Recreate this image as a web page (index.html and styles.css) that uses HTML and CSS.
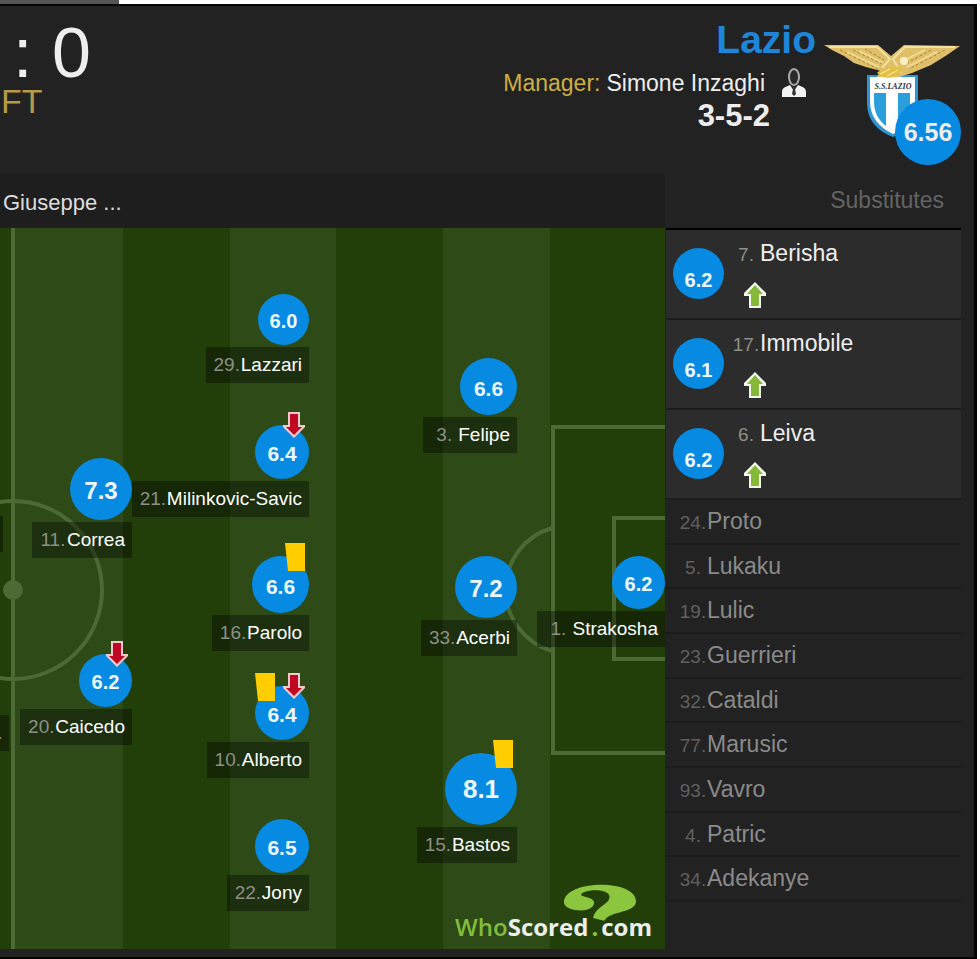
FILE: index.html
```html
<!DOCTYPE html>
<html lang="en">
<head>
  <meta charset="UTF-8">
  <title>Lazio - Match Centre</title>
  <link rel="stylesheet" href="styles.css">
</head>
<body>
  <!-- shared icons -->
  <svg class="defs" width="0" height="0" aria-hidden="true">
    <symbol id="sub-off" viewBox="0 0 22 26">
      <path d="M5 0h12v13h5v2L11 26 0 15v-2h5z" fill="#f3c9cd"/>
      <path d="M7 2h8v13h4l-8 8-8-8h4z" fill="#c00822"/>
    </symbol>
    <symbol id="sub-on" viewBox="0 0 22 26">
      <path d="M11 0l11 11v3h-5v12H5V14H0v-3z" fill="#f4faea"/>
      <path d="M11 3l8 9h-4v12H7V12H3z" fill="#86b93a"/>
    </symbol>
    <symbol id="card" viewBox="0 0 20 28">
      <path d="M0 0h20v28H3z" fill="#ffcd00"/>
    </symbol>
  </svg>

  <div class="tab-strip"></div>

  <main class="panel">
    <header class="match-header">
      <div class="result">
        <div class="score">: 0</div>
        <div class="status">FT</div>
      </div>
      <div class="team-info">
        <a class="team-name" href="#">Lazio</a>
        <div class="manager">
          <span class="manager-label">Manager:</span>
          <span class="manager-name">Simone Inzaghi</span>
          <svg class="manager-icon" viewBox="0 0 24 30">
            <ellipse cx="12" cy="9" rx="5" ry="8" fill="#2a2a2a" stroke="#aaa" stroke-width="2"/>
            <path d="M0 29v-5c0-4 3-5 8-7l4 6 4-6c5 2 8 3 8 7v5z" fill="#f2f2f2"/>
            <path d="M10 18h4l-1 3 1 5-2 2-2-2 1-5z" fill="#333"/>
          </svg>
        </div>
        <div class="formation">3-5-2</div>
      </div>
      <div class="crest">
        <svg class="crest-logo" viewBox="0 0 138 94">
          <path d="M44 31h51v26c0 18-10 29-25 36C54 87 44 76 44 58z" fill="#2f95d2"/>
          <path d="M47 33h45v24c0 15-8 26-22 33C56 83 47 73 47 57z" fill="#fff"/>
          <path d="M51 49h12v33c-8-6-12-14-12-25zM75 49h12v9c0 10-4 18-12 25z" fill="#2b9fdc"/>
          <text x="70" y="45" text-anchor="middle" class="crest-text">S.S.LAZIO</text>
          <path d="M1 1h54l13 11L81 1l56 1-13 9-16 10-19 8-13 4H54l4-6-15-4-12-4-10-7L9 6z" fill="#dfbf69"/>
          <path d="M6 3h48l13 12-8 9M132 3H82L70 15l8 14" fill="none" stroke="#f4e0a0" stroke-width="2"/>
          <path d="M24 8l32 15M36 7l24 12M114 8L84 23M102 6L80 17" fill="none" stroke="#f0d88e" stroke-width="2"/>
          <path d="M17 6l38 19M30 6l29 14M42 5l19 11M122 6L86 25M108 6L82 20" fill="none" stroke="#a98735" stroke-width="1" stroke-dasharray="3 2"/>
          <circle cx="81" cy="17" r="4" fill="#fbf0c4"/>
          <path d="M54 29c6-6 18-8 26-5l-4 7c-7 4-16 4-22-2z" fill="#e2bf45"/>
          <path d="M57 30l10-5M64 32l11-6" stroke="#fff0a8" stroke-width="1"/>
        </svg>
        <span class="team-rating">6.56</span>
      </div>
    </header>

    <div class="lineup">
      <section class="field">
        <div class="field-title">Giuseppe ...</div>
        <div class="pitch">
          <svg class="grass" viewBox="0 0 665 721" preserveAspectRatio="xMaxYMin slice" aria-hidden="true">
            <rect width="665" height="721" fill="#223e09"/>
            <g fill="#2d4a17">
              <rect x="13" width="110" height="721"/>
              <rect x="230" width="106" height="721"/>
              <rect x="443" width="107" height="721"/>
            </g>
            <g fill="none" stroke="#4b6a35" stroke-width="4">
              <path d="M13 0v721"/>
              <circle cx="13" cy="362" r="89"/>
              <path d="M665 199H553v326h112M665 290h-51v141h51"/>
              <path d="M552 300a64 64 0 0 0 0 123"/>
            </g>
            <circle cx="13" cy="362" r="10" fill="#4b6a35"/>
          </svg>

          <div class="player edge-high"><span class="label"></span></div>
          <div class="player edge-low"><span class="label">.</span></div>

          <div class="player attack correa">
            <span class="rating size-xl">7.3</span>
            <span class="label"><span class="num">11.</span><a href="#">Correa</a></span>
          </div>
          <div class="player attack caicedo">
            <span class="rating size-s">6.2
              <span class="events"><svg class="arrow"><use href="#sub-off"/></svg></span>
            </span>
            <span class="label"><span class="num">20.</span><a href="#">Caicedo</a></span>
          </div>

          <div class="player midfield lazzari">
            <span class="rating size-xs">6.0</span>
            <span class="label"><span class="num">29.</span><a href="#">Lazzari</a></span>
          </div>
          <div class="player midfield milinkovic">
            <span class="rating size-m">6.4
              <span class="events"><svg class="arrow"><use href="#sub-off"/></svg></span>
            </span>
            <span class="label"><span class="num">21.</span><a href="#">Milinkovic-Savic</a></span>
          </div>
          <div class="player midfield parolo">
            <span class="rating size-l">6.6
              <span class="events"><svg class="card"><use href="#card"/></svg></span>
            </span>
            <span class="label"><span class="num">16.</span><a href="#">Parolo</a></span>
          </div>
          <div class="player midfield alberto">
            <span class="rating size-m">6.4
              <span class="events"><svg class="card"><use href="#card"/></svg><svg class="arrow"><use href="#sub-off"/></svg></span>
            </span>
            <span class="label"><span class="num">10.</span><a href="#">Alberto</a></span>
          </div>
          <div class="player midfield jony">
            <span class="rating size-m">6.5</span>
            <span class="label"><span class="num">22.</span><a href="#">Jony</a></span>
          </div>

          <div class="player defence felipe">
            <span class="rating size-l">6.6</span>
            <span class="label"><span class="num">3.</span><a href="#">Felipe</a></span>
          </div>
          <div class="player defence acerbi">
            <span class="rating size-xl">7.2</span>
            <span class="label"><span class="num">33.</span><a href="#">Acerbi</a></span>
          </div>
          <div class="player defence bastos">
            <span class="rating size-xxl">8.1
              <span class="events"><svg class="card"><use href="#card"/></svg></span>
            </span>
            <span class="label"><span class="num">15.</span><a href="#">Bastos</a></span>
          </div>

          <div class="player keeper">
            <span class="rating size-s">6.2</span>
            <span class="label"><span class="num">1.</span><a href="#">Strakosha</a></span>
          </div>

          <div class="brand">
            <svg class="brand-mark" viewBox="490 493 222 112" aria-hidden="true">
              <path d="M545 573C510 572 490 562 492 545 495 515 545 495 605 495 665 495 710 515 710 545 710 570 670 575 640 585 625 590 620 596 614 604L580 596C585 570 610 560 625 545 640 525 620 513 590 512 560 512 540 520 545 528 560 535 585 535 583 552 580 567 560 573 545 573z" fill="#8cc63f"/>
            </svg>
            <span class="who">Who</span>Scored<span class="dot">.</span>com
          </div>
        </div>
      </section>

      <aside class="substitutes">
        <h2>Substitutes</h2>
        <ul class="used">
          <li>
            <span class="rating size-xs">6.2</span>
            <div class="sub-info">
              <div><span class="num">7.</span><a href="#">Berisha</a></div>
              <svg class="arrow"><use href="#sub-on"/></svg>
            </div>
          </li>
          <li>
            <span class="rating size-xs">6.1</span>
            <div class="sub-info">
              <div><span class="num">17.</span><a href="#">Immobile</a></div>
              <svg class="arrow"><use href="#sub-on"/></svg>
            </div>
          </li>
          <li>
            <span class="rating size-xs">6.2</span>
            <div class="sub-info">
              <div><span class="num">6.</span><a href="#">Leiva</a></div>
              <svg class="arrow"><use href="#sub-on"/></svg>
            </div>
          </li>
        </ul>
        <ul class="bench">
          <li><span class="num">24.</span><a href="#">Proto</a></li>
          <li><span class="num">5.</span><a href="#">Lukaku</a></li>
          <li><span class="num">19.</span><a href="#">Lulic</a></li>
          <li><span class="num">23.</span><a href="#">Guerrieri</a></li>
          <li><span class="num">32.</span><a href="#">Cataldi</a></li>
          <li><span class="num">77.</span><a href="#">Marusic</a></li>
          <li><span class="num">93.</span><a href="#">Vavro</a></li>
          <li><span class="num">4.</span><a href="#">Patric</a></li>
          <li><span class="num">34.</span><a href="#">Adekanye</a></li>
        </ul>
      </aside>
    </div>
  </main>
</body>
</html>
```
FILE: styles.css
```css
* {
  box-sizing: border-box;
}
body {
  margin: 0;
  background: #fff;
  font-family: "Liberation Sans", Arial, sans-serif;
  color: #eee;
}
a {
  color: inherit;
  text-decoration: none;
}
ul {
  list-style: none;
  margin: 0;
  padding: 0;
}
svg {
  display: block;
}
.defs {
  position: absolute;
}
.tab-strip {
  width: 119px;
  height: 4px;
  background: #555;
}
.panel {
  margin-right: 3px;
  padding-bottom: 8px;
  background: #222;
  border: solid #050505;
  border-width: 2px 3px 2px 0;
}

/* header */
.match-header {
  display: flex;
  height: 168px;
  padding: 12px 13px 0 0;
}
.score {
  padding-left: 13px;
  font-size: 70px;
  line-height: 70px;
}
.status {
  padding-left: 1px;
  font-size: 34px;
  line-height: 26px;
  color: #b8994a;
}
.team-info {
  flex: 1;
  display: flex;
  flex-direction: column;
  align-items: flex-end;
}
.team-name {
  font-size: 39px;
  line-height: 44px;
  font-weight: bold;
  color: #1d86d8;
}
.manager {
  display: flex;
  align-items: center;
  gap: 6px;
  height: 42px;
  padding-right: 10px;
  font-size: 23px;
}
.manager-label {
  color: #cdb044;
}
.manager-icon {
  width: 24px;
  height: 30px;
  margin-left: 11px;
}
.formation {
  padding-right: 46px;
  font-size: 31px;
  line-height: 24px;
  font-weight: bold;
}
.crest {
  position: relative;
  width: 138px;
  margin-left: 7px;
  padding-top: 26px;
}
.crest-logo {
  width: 138px;
  height: 94px;
}
.crest-text {
  font: italic bold 8px "Liberation Serif", serif;
  fill: #334;
}
.team-rating {
  position: absolute;
  right: 0;
  top: 81px;
  width: 66px;
  border-radius: 50%;
  background: #078ae2;
  font-size: 25px;
  line-height: 66px;
  font-weight: bold;
  text-align: center;
}

/* lineup */
.lineup {
  display: flex;
}
.field {
  flex: 1;
}
.field-title {
  height: 54px;
  padding: 2px 3px 0;
  background: #1e1e1e;
  font-size: 22px;
  line-height: 54px;
  color: #ddd;
}
.pitch {
  position: relative;
  height: 721px;
  overflow: hidden;
}
.grass {
  width: 100%;
  height: 100%;
}
.player {
  position: absolute;
  display: flex;
  flex-direction: column;
  align-items: flex-end;
  gap: 2px;
}
.label {
  display: flex;
  min-width: 20px;
  height: 36px;
  padding: 0 7px;
  justify-content: flex-end;
  background: rgba(0, 0, 0, 0.36);
  font-size: 19px;
  line-height: 36px;
  color: #fff;
}
.num {
  display: inline-block;
  width: 28px;
  font-size: 19px;
  text-align: center;
  color: #8c8f86;
}
.rating {
  position: relative;
  display: flex;
  align-items: center;
  justify-content: center;
  padding-top: 4px;
  border-radius: 50%;
  background: #078ae2;
  font-size: 20px;
  font-weight: bold;
  color: #eef9ff;
}
.size-xs { width: 51px; height: 51px; }
.size-s { width: 53px; height: 53px; }
.size-m { width: 54px; height: 54px; font-size: 21px; }
.size-l { width: 57px; height: 57px; font-size: 21px; }
.size-xl { width: 62px; height: 62px; font-size: 24px; }
.size-xxl { width: 72px; height: 72px; padding-top: 0; font-size: 26px; }

.events {
  position: absolute;
  top: -13px;
  right: 4px;
  display: flex;
  gap: 8px;
}
.arrow {
  width: 22px;
  height: 26px;
}
.card {
  width: 20px;
  height: 28px;
}

/* player spots, measured from the goal line */
.attack { right: 533px; }
.midfield { right: 356px; }
.defence { right: 148px; }
.keeper { right: 0; top: 328px; }
.correa { top: 230px; }
.caicedo { top: 426px; }
.lazzari { top: 66px; }
.milinkovic { top: 197px; }
.parolo { top: 328px; }
.alberto { top: 458px; }
.jony { top: 591px; }
.felipe { top: 130px; }
.acerbi { top: 328px; }
.bastos { top: 525px; }
.edge-high { right: 662px; top: 288px; }
.edge-low { right: 656px; top: 487px; }

.brand {
  position: absolute;
  right: 13px;
  bottom: 6px;
  font-family: "Open Sans", sans-serif;
  font-size: 24px;
  line-height: 32px;
  font-weight: bold;
}
.who {
  font-weight: 600;
  color: #84bd3e;
}
.dot {
  padding: 0 3px;
  color: #8cc63f;
}
.brand-mark {
  position: absolute;
  right: 15px;
  top: -27px;
  width: 74px;
  height: 37px;
}

/* substitutes */
.substitutes {
  width: 309px;
  padding: 0 13px 0 1px;
}
.substitutes h2 {
  height: 54px;
  margin: 0;
  padding-right: 17px;
  font-size: 23px;
  line-height: 52px;
  font-weight: normal;
  text-align: right;
  color: #646464;
}
.used {
  border-top: 2px solid #000;
}
.used li {
  display: flex;
  gap: 8px;
  height: 90px;
  padding: 18px 7px 0;
  background: #2c2c2c;
  border-bottom: 2px solid #1d1d1d;
}
.used .rating {
  padding-top: 13px;
}
.used a {
  font-size: 23px;
}
.sub-info {
  line-height: 26px;
  margin-top: -8px;
}
.sub-info .arrow {
  margin: 13px 0 0 12px;
}
.bench {
  display: grid;
  grid-template-rows: repeat(9, 1fr);
  height: 402px;
  color: #8a8a8a;
}
.bench li {
  display: flex;
  align-items: baseline;
  padding-left: 13px;
  border-bottom: 2px solid #1b1b1b;
  font-size: 23px;
  line-height: 42px;
}
.bench .num {
  line-height: 30px;
  color: #606060;
}
```
